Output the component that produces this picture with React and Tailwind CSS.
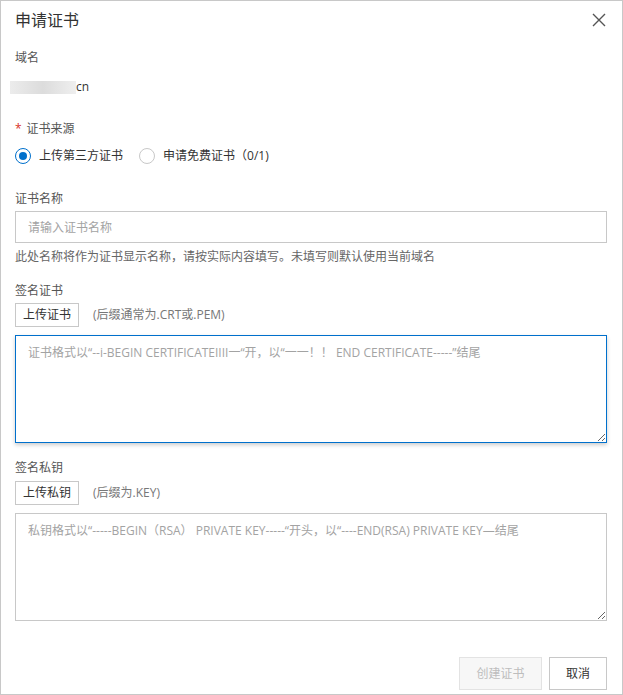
import React from "react";

const font = { fontFamily: '"Open Sans", "Noto Sans CJK SC", sans-serif' };

function Radio({ checked, label }) {
  return (
    <label className="flex items-center gap-[8px] cursor-pointer">
      <span
        className={
          "w-[16px] h-[16px] rounded-full border flex items-center justify-center bg-white " +
          (checked ? "border-[#0070cc]" : "border-[#c8c8c8]")
        }
      >
        {checked && <span className="w-[8px] h-[8px] rounded-full bg-[#0070cc]" />}
      </span>
      <span className="text-[12px] leading-[18px] text-[#333]">{label}</span>
    </label>
  );
}

export default function App() {
  return (
    <div
      className="w-[623px] h-[695px] border border-[#c8c8c8] bg-white text-[#333] flex flex-col"
      style={font}
    >
      <div className="h-[38px] flex items-center justify-between pl-[14px] pr-[16px]">
        <span className="text-[16px] leading-[20px] text-[#333]">申请证书</span>
        <svg width="14" height="14" viewBox="0 0 14 14" className="text-[#555]">
          <path d="M1 1 L13 13 M13 1 L1 13" stroke="currentColor" strokeWidth="1.4" fill="none" />
        </svg>
      </div>

      <div className="flex flex-col pl-[14px] pr-[15px]">
        <div className="mt-[10px] text-[12px] leading-[18px] text-[#555]">域名</div>
        <div className="mt-[11px] flex items-center -ml-[5px] h-[18px]">
          <span className="w-[66px] h-[13px] bg-gradient-to-r from-[#ececec] via-[#dcdcdc] to-[#efefef]" />
          <span className="text-[12px] leading-[18px] text-[#333]">cn</span>
        </div>

        <div className="mt-[24px] text-[12px] leading-[18px] text-[#555] flex items-center">
          <span className="text-[#d93026] mr-[5px]">*</span>证书来源
        </div>
        <div className="mt-[9px] flex items-center gap-[16px]">
          <Radio checked label="上传第三方证书" />
          <Radio label="申请免费证书（0/1)" />
        </div>

        <div className="mt-[25px] text-[12px] leading-[18px] text-[#555]">证书名称</div>
        <input
          className="mt-[3px] h-[32px] w-full border border-[#c8c8c8] px-[12px] text-[12px] outline-none placeholder:text-[#a3a3a3]"
          placeholder="请输入证书名称"
          style={font}
        />
        <div className="mt-[5px] text-[12px] leading-[18px] text-[#666]">
          此处名称将作为证书显示名称，请按实际内容填写。未填写则默认使用当前域名
        </div>

        <div className="mt-[16px] text-[12px] leading-[18px] text-[#555]">签名证书</div>
        <div className="mt-[3px] flex items-center">
          <button className="h-[24px] w-[64px] border border-[#c8c8c8] bg-white text-[12px] text-[#333]" style={font}>
            上传证书
          </button>
          <span className="ml-[14px] text-[12px] text-[#777]">(后缀通常为.CRT或.PEM)</span>
        </div>
        <textarea
          className="mt-[8px] h-[108px] w-full border border-[#0070cc] px-[12px] pt-[8px] text-[12px] leading-[18px] outline-none shadow-[0_2px_4px_rgba(0,0,0,0.2)] placeholder:text-[#a3a3a3]"
          placeholder="证书格式以“--i-BEGIN CERTIFICATEIIII一“开，以“一一！！ END CERTIFICATE-----”结尾"
          style={font}
        />

        <div className="mt-[16px] text-[12px] leading-[18px] text-[#555]">签名私钥</div>
        <div className="mt-[4px] flex items-center">
          <button className="h-[24px] w-[64px] border border-[#c8c8c8] bg-white text-[12px] text-[#333]" style={font}>
            上传私钥
          </button>
          <span className="ml-[14px] text-[12px] text-[#777]">(后缀为.KEY)</span>
        </div>
        <textarea
          className="mt-[8px] h-[108px] w-full border border-[#c8c8c8] px-[12px] pt-[8px] text-[12px] leading-[18px] outline-none placeholder:text-[#a3a3a3]"
          placeholder="私钥格式以“-----BEGIN（RSA） PRIVATE KEY-----“开头，以“----END(RSA) PRIVATE KEY—结尾"
          style={font}
        />

        <div className="mt-[36px] flex justify-end gap-[7px]">
          <button
            className="h-[33px] w-[83px] border border-[#e3e3e3] bg-[#f7f7f7] text-[12px] text-[#bdbdbd]"
            style={font}
          >
            创建证书
          </button>
          <button
            className="h-[33px] w-[58px] border border-[#c8c8c8] bg-white text-[12px] text-[#333]"
            style={font}
          >
            取消
          </button>
        </div>
      </div>
    </div>
  );
}
